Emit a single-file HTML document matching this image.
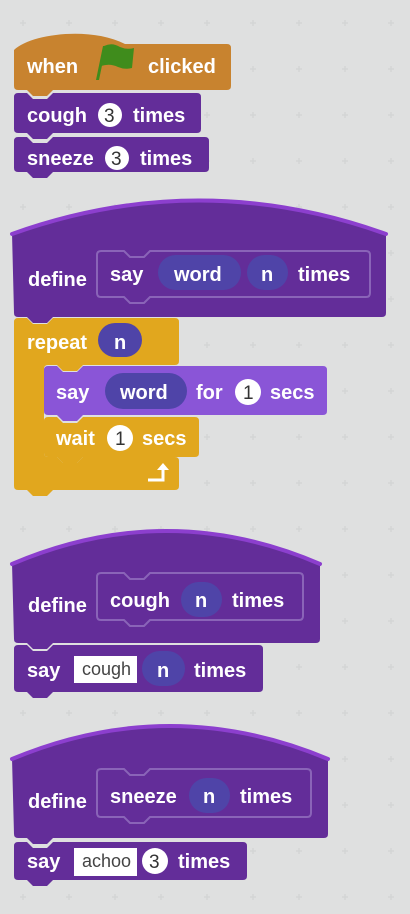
<!DOCTYPE html>
<html><head><meta charset="utf-8"><style>
html,body{margin:0;padding:0;background:#dfe0e0;}
svg{display:block}
text{font-family:"Liberation Sans",sans-serif;font-weight:bold;font-size:20px;fill:#fff}
.n{fill:#333;font-weight:normal;font-size:19px}
.w{fill:#444;font-weight:normal;font-size:18px}
</style></head><body>
<svg width="410" height="914" viewBox="0 0 410 914" xmlns="http://www.w3.org/2000/svg">
<defs>
<pattern id="p" width="46" height="46" patternUnits="userSpaceOnUse" x="0" y="0">
<path d="M20,23h6M23,20v6" stroke="#d2d4d4" stroke-width="1.3"/>
</pattern>
</defs>
<rect width="410" height="914" fill="#dfe0e0"/>
<rect width="410" height="914" fill="url(#p)"/>

<!-- when clicked -->
<path d="M14,50 C30,34 90,26 125,44 H227 Q231,44 231,48 V86 Q231,90 227,90 H53 l-6,6 h-14 l-6,-6 H18 Q14,90 14,86 Z" fill="#c8832f"/>
<text x="27" y="73">when</text>
<path d="M96,80 L103,46 L106,46 L99,80 Z" fill="#3f8c1c"/>
<path d="M104,46 Q112,42 120,47 Q127,50 134,48 L132,68 Q125,70 118,67 Q110,63 101,66 Z" fill="#3f8c1c"/>
<text x="148" y="73">clicked</text>

<!-- cough 3 times -->
<path d="M14,97 Q14,93 18,93 H27 l6,6 h14 l6,-6 H197 Q201,93 201,97 V129 Q201,133 197,133 H53 l-6,6 h-14 l-6,-6 H18 Q14,133 14,129 Z" fill="#632d99"/>
<text x="27" y="122">cough</text>
<circle cx="110" cy="115" r="12" fill="#fff"/>
<text x="104" y="122" class="n">3</text>
<text x="133" y="122">times</text>

<!-- sneeze 3 times -->
<path d="M14,141 Q14,137 18,137 H27 l6,6 h14 l6,-6 H205 Q209,137 209,141 V168 Q209,172 205,172 H53 l-6,6 h-14 l-6,-6 H18 Q14,172 14,168 Z" fill="#632d99"/>
<text x="27" y="165">sneeze</text>
<circle cx="117" cy="158" r="12" fill="#fff"/>
<text x="111" y="165" class="n">3</text>
<text x="140" y="165">times</text>

<!-- define say word n times -->
<path d="M12,233 Q199,167 386,233 V313 Q386,317 382,317 H53 l-6,6 h-14 l-6,-6 H18 Q14,317 14,313 Z" fill="#632d99"/>
<path d="M12,234 Q199,167 386,234" fill="none" stroke="#8c3fce" stroke-width="4" stroke-linecap="round"/>
<path d="M101,251 H124 l6,6 h14 l6,-6 H366 Q370,251 370,255 V293 Q370,297 366,297 H150 l-6,6 h-14 l-6,-6 H101 Q97,297 97,293 V255 Q97,251 101,251 Z" fill="none" stroke="#8a64b8" stroke-width="2"/>
<text x="28" y="286">define</text>
<text x="110" y="281">say</text>
<rect x="158" y="255" width="83" height="35" rx="17.5" fill="#4f44a8"/>
<text x="174" y="281">word</text>
<rect x="247" y="255" width="41" height="35" rx="17.5" fill="#4f44a8"/>
<text x="261" y="281">n</text>
<text x="298" y="281">times</text>

<!-- repeat C -->
<path d="M14,322 Q14,318 18,318 H27 l6,6 h14 l6,-6 H175 Q179,318 179,322 V361 Q179,365 175,365 H83 l-6,6 h-14 l-6,-6 H48 Q44,365 44,369 V453 Q44,457 48,457 H57 l6,6 h14 l6,-6 H175 Q179,457 179,461 V486 Q179,490 175,490 H53 l-6,6 h-14 l-6,-6 H18 Q14,490 14,486 Z" fill="#e1a71e"/>
<text x="27" y="349">repeat</text>
<rect x="98" y="323" width="44" height="34" rx="17" fill="#4f44a8"/>
<text x="114" y="349">n</text>
<path d="M148,480 H163 V469" fill="none" stroke="#fff" stroke-width="3"/>
<path d="M157,470 L163,463 L169,470 Z" fill="#fff"/>

<!-- say word for 1 secs -->
<path d="M44,370 Q44,366 48,366 H57 l6,6 h14 l6,-6 H323 Q327,366 327,370 V411 Q327,415 323,415 H83 l-6,6 h-14 l-6,-6 H48 Q44,415 44,411 Z" fill="#8a55d7"/>
<text x="56" y="399">say</text>
<rect x="105" y="373" width="82" height="36" rx="18" fill="#4f44a8"/>
<text x="120" y="399">word</text>
<text x="196" y="399">for</text>
<circle cx="248" cy="392" r="13" fill="#fff"/>
<text x="243" y="399" class="n">1</text>
<text x="270" y="399">secs</text>

<!-- wait 1 secs -->
<path d="M44,421 Q44,417 48,417 H57 l6,6 h14 l6,-6 H195 Q199,417 199,421 V453 Q199,457 195,457 H83 l-6,6 h-14 l-6,-6 H48 Q44,457 44,453 Z" fill="#e1a71e"/>
<text x="56" y="445">wait</text>
<circle cx="120" cy="438" r="13" fill="#fff"/>
<text x="115" y="445" class="n">1</text>
<text x="142" y="445">secs</text>

<!-- define cough n times -->
<path d="M12,563 Q167,498 320,563 V639 Q320,643 316,643 H53 l-6,6 h-14 l-6,-6 H18 Q14,643 14,639 Z" fill="#632d99"/>
<path d="M12,564 Q167,498 320,564" fill="none" stroke="#8c3fce" stroke-width="4" stroke-linecap="round"/>
<path d="M101,573 H124 l6,6 h14 l6,-6 H299 Q303,573 303,577 V616 Q303,620 299,620 H150 l-6,6 h-14 l-6,-6 H101 Q97,620 97,616 V577 Q97,573 101,573 Z" fill="none" stroke="#8a64b8" stroke-width="2"/>
<text x="28" y="612">define</text>
<text x="110" y="607">cough</text>
<rect x="181" y="582" width="41" height="35" rx="17.5" fill="#4f44a8"/>
<text x="195" y="607">n</text>
<text x="232" y="607">times</text>

<!-- say cough n times -->
<path d="M14,649 Q14,645 18,645 H27 l6,6 h14 l6,-6 H259 Q263,645 263,649 V688 Q263,692 259,692 H53 l-6,6 h-14 l-6,-6 H18 Q14,692 14,688 Z" fill="#632d99"/>
<text x="27" y="677">say</text>
<rect x="74" y="656" width="63" height="27" fill="#fff"/>
<text x="82" y="675" class="w">cough</text>
<rect x="142" y="651" width="43" height="35" rx="17.5" fill="#4f44a8"/>
<text x="157" y="677">n</text>
<text x="194" y="677">times</text>

<!-- define sneeze n times -->
<path d="M12,758 Q170,693 328,758 V834 Q328,838 324,838 H53 l-6,6 h-14 l-6,-6 H18 Q14,838 14,834 Z" fill="#632d99"/>
<path d="M12,759 Q170,693 328,759" fill="none" stroke="#8c3fce" stroke-width="4" stroke-linecap="round"/>
<path d="M101,769 H124 l6,6 h14 l6,-6 H307 Q311,769 311,773 V813 Q311,817 307,817 H150 l-6,6 h-14 l-6,-6 H101 Q97,817 97,813 V773 Q97,769 101,769 Z" fill="none" stroke="#8a64b8" stroke-width="2"/>
<text x="28" y="808">define</text>
<text x="110" y="803">sneeze</text>
<rect x="189" y="778" width="41" height="35" rx="17.5" fill="#4f44a8"/>
<text x="203" y="803">n</text>
<text x="240" y="803">times</text>

<!-- say achoo 3 times -->
<path d="M14,846 Q14,842 18,842 H27 l6,6 h14 l6,-6 H243 Q247,842 247,846 V876 Q247,880 243,880 H53 l-6,6 h-14 l-6,-6 H18 Q14,880 14,876 Z" fill="#632d99"/>
<text x="27" y="868">say</text>
<rect x="74" y="848" width="63" height="28" fill="#fff"/>
<text x="82" y="867" class="w">achoo</text>
<circle cx="155" cy="861" r="13" fill="#fff"/>
<text x="149" y="868" class="n">3</text>
<text x="178" y="868">times</text>
</svg>
</body></html>
